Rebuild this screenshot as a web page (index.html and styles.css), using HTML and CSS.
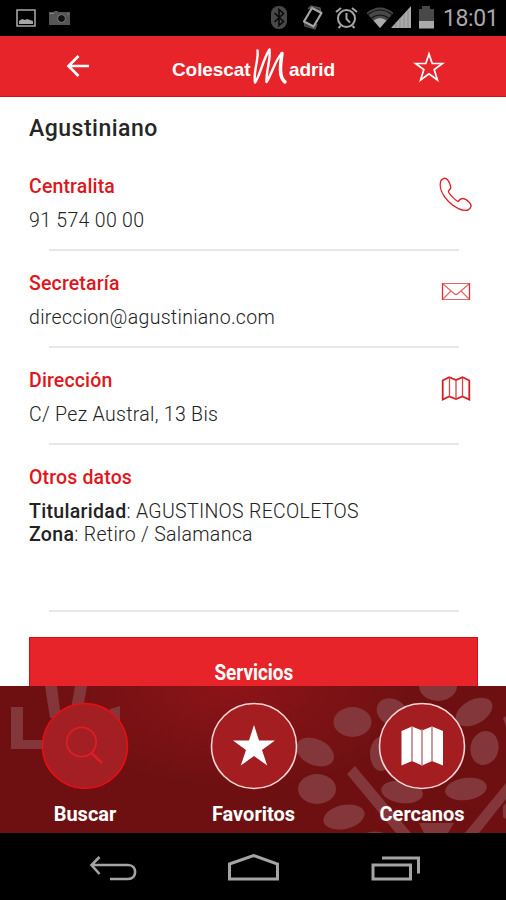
FILE: index.html
```html
<!DOCTYPE html>
<html lang="es">
<head>
<meta charset="utf-8">
<title>Colescat Madrid</title>
<link rel="stylesheet" href="styles.css">
</head>
<body>
<div class="screen">
  <div class="status">
    <svg class="status-left" viewBox="0 0 80 36">
      <path d="M17 10h18v16H17z" fill="none" stroke="#a5a5a5" stroke-width="1.6"/>
      <path d="M19 24v-3l3-2 3 1 2-1 6 2v3z" fill="#a5a5a5"/>
      <path d="M49 12h5v-1h4v1h12v13H49z" fill="#555"/>
      <path d="M50 13.5h4M67 14h2" stroke="#888" stroke-width="1.2"/>
      <circle cx="61.500" cy="18.500" r="4" fill="#111" stroke="#808080"/>
    </svg>
    <div class="status-right">
      <svg class="status-icons" viewBox="268 0 170 36">
        <rect x="271" y="6" width="16" height="23" rx="7.500" fill="#484848"/>
        <path d="M274.500 13l9 8.500-4.500 4V9.500l4.500 4-9 8.500" fill="none" stroke="#090909" stroke-width="1.600"/>
        <path d="M304 20l1 6 10 3 2-5M308 9l3-3 9 2 1 5" fill="#333" stroke="#555" stroke-width="1.400"/>
        <path d="M312 8l9.500 5-8 13.500-9.500-5z" fill="#000" stroke="#a6a6a6" stroke-width="2.200" stroke-linejoin="round"/>
        <circle cx="346.500" cy="18.500" r="8.500" fill="none" stroke="#a6a6a6" stroke-width="2"/>
        <path d="M346.500 13v6l3.500 3.500M336 12l5-4M357 12l-5-4M340.500 26l-2 2M352.500 26l2 2" fill="none" stroke="#a6a6a6" stroke-width="2"/>
        <path d="M366.500 13q13.500-11 27 0L380 28z" fill="#484848"/>
        <path d="M368 14.500q12-9 24 0M371.500 18q8.500-6 17 0" fill="none" stroke="#111" stroke-width="1.200"/>
        <path d="M373.500 20.500q6.500-5 13 0L380 28z" fill="#ababab"/>
        <path d="M411 6v22h-20z" fill="#aaa"/>
        <path d="M396 22v6M400 18v10M404 14v14M408 10v18" stroke="#888" stroke-width=".8"/>
        <path d="M419 9h3V6h8v3h4v12h-15z" fill="#484848"/>
        <path d="M419 21h15v7.500h-15z" fill="#aaa"/>
      </svg>
      <span class="clock">18:01</span>
    </div>
  </div>
  <header class="header">
    <svg class="back" viewBox="0 0 26 24"><path d="M24 12H3.500M13.500 2L3.500 12l10 10" fill="none" stroke="#fff" stroke-width="2.700"/></svg>
    <div class="brand">
      <span class="brand-first">Colescat</span>
      <svg class="brand-m" viewBox="0 0 38 40"><path d="M6.500 3.500C8 12 2 25 4 35.500C9 29 12 12 18.500 2.500C20 12 15 24 15.500 35C21 27 24 13 31 6" fill="none" stroke="#fff" stroke-width="2.400" stroke-linejoin="round" stroke-linecap="round"/><path d="M31 6.500C29.500 17 27.500 30 34 35" fill="none" stroke="#fff" stroke-width="3.500" stroke-linecap="round"/></svg>
      <span class="brand-last">adrid</span>
    </div>
    <svg class="fav" viewBox="0 0 32 32"><path d="M16 3l3.200 9.500H29.500l-8.300 6 3.200 10.500-8.400-6.300-8.400 6.300 3.200-10.500-8.300-6h10.300z" fill="none" stroke="#fff" stroke-width="1.700"/></svg>
  </header>
  <main class="content">
    <h1 class="name">Agustiniano</h1>
    <section class="row">
      <div><h2 class="label">Centralita</h2><p class="value">91 574 00 00</p></div>
      <svg class="icon" viewBox="0 0 36 36"><path d="M3 3.500C6-.5 9.500 1 11.500 6C13.500 11 13 11.500 10.500 14C9.500 15.500 18 24 20 24.500C23 20.500 26 20.500 31 25C34.500 28.500 33 31 30 33C19 36-2 17 3 3.500z" fill="none" stroke="#df2428" stroke-width="1.400"/></svg>
    </section>
    <section class="row">
      <div><h2 class="label">Secretaría</h2><p class="value">direccion@agustiniano.com</p></div>
      <svg class="icon" viewBox="0 0 36 36"><path d="M4.500 9.500h27v16h-27zl11.500 10q2 2 4 0l11.500-10M4.500 25.500l8.500-8.500M31.500 25.500L23 17" fill="none" stroke="#e76464" stroke-width="1.200"/><path d="M4.500 9v17M31.500 9v17" stroke="#df3034" stroke-width="1.200"/></svg>
    </section>
    <section class="row">
      <div><h2 class="label">Dirección</h2><p class="value">C/ Pez Austral, 13 Bis</p></div>
      <svg class="icon" viewBox="0 0 36 36"><path d="M4.700 9.500l6.500-3.300L18 9l6.500-2.800 6.800 3.300v19L24.500 25.500 18 28l-6.800-2.500-6.500 3z" fill="none" stroke="#d51d22" stroke-width="1.800"/><path d="M11.500 6.500v19M18 9v19M24.500 6.500v19" stroke="#d94448" stroke-width="1.300"/></svg>
    </section>
    <section class="row row-tall">
      <div><h2 class="label">Otros datos</h2>
      <p class="value line v-owner"><b>Titularidad</b>: AGUSTINOS RECOLETOS</p>
      <p class="value line"><b>Zona</b>: Retiro / Salamanca</p></div>
    </section>
    <div class="button"><span class="button-text">Servicios</span></div>
  </main>
  <nav class="tabs">
    <svg class="pattern" viewBox="0 0 506 147">
      <g fill="#83373a">
        <path d="M11 21h12v33h27v9H11zM45 0h12l4 32H50zM75 0h12l-5 28H70zM110 23l10-3v32h-10z"/>
        <ellipse cx="352.500" cy="36" rx="19" ry="15"/>
        <ellipse cx="392" cy="26" rx="16" ry="13" transform="rotate(28 392 26)"/>
        <ellipse cx="438" cy="0" rx="19" ry="15"/>
        <ellipse cx="474" cy="26" rx="20" ry="12" transform="rotate(-29 474 26)"/>
        <ellipse cx="315" cy="66" rx="20" ry="13" transform="rotate(25 315 66)"/>
        <ellipse cx="381" cy="68" rx="11" ry="17"/>
        <ellipse cx="484.500" cy="62" rx="14" ry="17" transform="rotate(12 484.500 62)"/>
        <ellipse cx="317" cy="103" rx="19" ry="15"/>
        <ellipse cx="402" cy="106" rx="21" ry="11" transform="rotate(8 402 106)"/>
        <ellipse cx="466" cy="103" rx="21" ry="11" transform="rotate(-8 466 103)"/>
        <ellipse cx="344" cy="131" rx="21" ry="12" transform="rotate(-13 344 131)"/>
        <path d="M355 80l-8 8 49 59h15zM506 97v16l-27 34h-14zM419 137h35l-6 10h-24zM366 147q9-3 18 0zM503 32l3-2v11zM503 120l3-3v16l-3-2z"/>
      </g>
    </svg>
    <div class="tab">
      <svg class="circle" viewBox="0 0 88 88"><circle cx="44" cy="44" r="42.500" fill="#a41f23" stroke="#e90e13" stroke-width="1.600"/><circle cx="40.500" cy="40" r="14.700" fill="none" stroke="#dd1e28" stroke-width="1.700"/><path d="M50.500 51L61 61" stroke="#dd1e28" stroke-width="2.600"/></svg>
      <span class="tab-text">Buscar</span>
    </div>
    <div class="tab">
      <svg class="circle" viewBox="0 0 88 88"><circle cx="44" cy="44" r="42.500" fill="#a41d20" stroke="#f5d5d5" stroke-width="1.600"/><path d="M44 23l5 15.500h16L52 48l5.200 15.500L44 54l-13.200 9.500L36 48l-13-9.500h16z" fill="#fff"/></svg>
      <span class="tab-text">Favoritos</span>
    </div>
    <div class="tab">
      <svg class="circle" viewBox="0 0 88 88"><circle cx="44" cy="44" r="42.500" fill="#a41d20" stroke="#f5d5d5" stroke-width="1.600"/><path d="M23.500 29L34 24.500 44 28.500 54 24.500 65 29v34.500L54 59 44 63.500 34 59l-10.500 4.500z" fill="#fff"/><path d="M34 24v36M44 27v37M54 24v36" stroke="#c06a6e" stroke-width="1.400"/></svg>
      <span class="tab-text">Cercanos</span>
    </div>
  </nav>
  <div class="android">
    <svg class="android-icons" viewBox="0 0 506 67" fill="none" stroke="#a4a4a4">
      <path d="M99.500 24l-8 8 8 9M91.500 32h36.500c9.500 0 9.500 14 0 14h-18" stroke-width="2.600"/>
      <path d="M229.500 31l24-8.500 24 8.500v15h-48z" stroke-width="3"/>
      <path d="M373 32h37.500v14H373zM382 25h36.500v15.500" stroke-width="3"/>
    </svg>
  </div>
</div>
</body>
</html>
```
FILE: styles.css
```css
* { box-sizing: border-box; }
body, h1, h2, p { margin: 0; }
body { font-family: Roboto, "Liberation Sans", sans-serif; background: #fff; }
svg { display: block; flex: none; }
.screen { width: 506px; height: 900px; overflow: hidden; display: flex; flex-direction: column; }
.status { height: 36px; flex: none; background: #000; display: flex; justify-content: space-between; }
.status-left { width: 80px; height: 36px; }
.status-right { display: flex; width: 238px; }
.status-icons { width: 170px; height: 36px; }
.clock { margin-left: 5px; color: #a9a9a9; font-size: 23px; line-height: 37px; letter-spacing: -0.4px; white-space: nowrap; }
.header { height: 61px; flex: none; background: #e62429; border-bottom: 1px solid #c9151a; display: flex; align-items: center; justify-content: space-between; padding: 0 61px 0 65px; }
.back { width: 26px; height: 24px; }
.brand { display: flex; align-items: center; color: #fff; font-family: "Liberation Sans", sans-serif; font-size: 19px; font-weight: 700; width: 165px; margin: 2px 0 0 5px; }
.brand-first { width: 79px; margin-top: 6px; letter-spacing: -0.1px; }
.brand-m { width: 38px; height: 40px; }
.brand-last { margin-top: 6px; letter-spacing: -0.1px; }
.fav { width: 32px; height: 32px; margin-top: 2px; }
.content { flex: none; height: 589px; overflow: hidden; background: #fff; padding: 17px 28px 0 29px; }
.name { font-size: 23px; line-height: 30px; height: 56px; font-weight: 500; letter-spacing: 0.5px; color: #262626; white-space: nowrap; }
.row { height: 97px; padding-top: 3px; display: flex; justify-content: space-between; position: relative; }
.row::after { content: ""; position: absolute; left: 20px; right: 19px; bottom: 16px; height: 2px; background: #e7e7e7; }
.label { font-size: 19.5px; line-height: 28px; font-weight: 500; letter-spacing: 0.15px; color: #de171c; white-space: nowrap; }
.value { margin-top: 6px; font-size: 19.5px; line-height: 28px; font-weight: 300; letter-spacing: 0.31px; color: #222; white-space: nowrap; }
.value b { font-weight: 500; }
.value.line { line-height: 23px; margin: 0; }
.value.v-owner { padding-top: 8px; }
.icon { width: 36px; height: 36px; margin: 4px 4px 0 0; }
.row-tall { height: 176px; }
.row-tall::after { bottom: 25px; }
.button { height: 70px; background: #e62429; border: 1px solid #cf1117; text-align: center; color: #fff; font-size: 22px; font-weight: 700; line-height: 69px; }
.button-text { display: inline-block; transform: scaleX(0.86); }
.tabs { height: 147px; flex: none; position: relative; display: flex; justify-content: space-between; padding: 16px 40px 0 41px; background: radial-gradient(ellipse 190px 100px at 235px 0, #8d1418, #6e1012); }
.pattern { position: absolute; left: 0; top: 0; width: 506px; height: 147px; }
.tab { position: relative; width: 88px; display: flex; flex-direction: column; align-items: center; }
.circle { width: 88px; height: 88px; }
.tab-text { color: #fff; font-size: 20px; font-weight: 700; line-height: 28px; margin-top: 10px; white-space: nowrap; }
.android { height: 67px; flex: none; background: #000; }
.android-icons { width: 506px; height: 67px; }
```
